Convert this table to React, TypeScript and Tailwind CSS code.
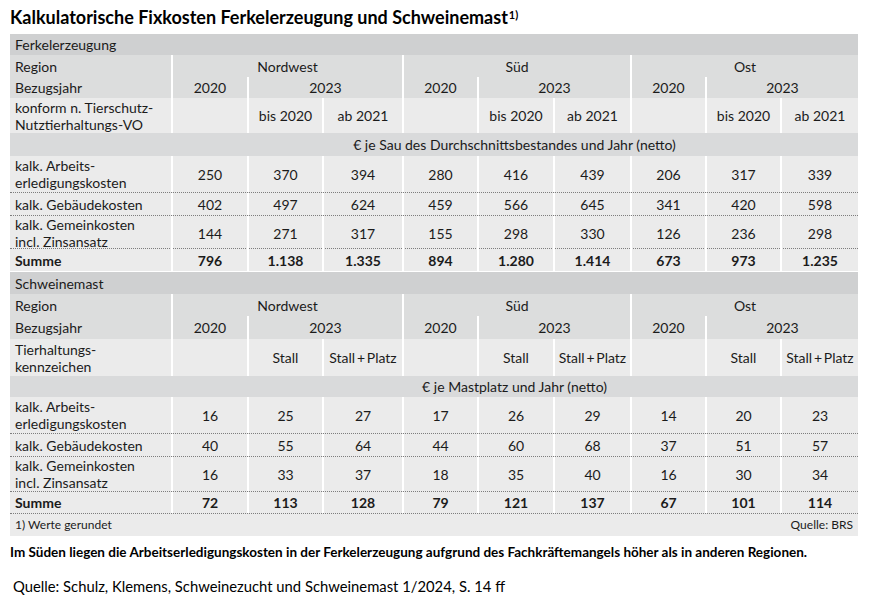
import React from "react";

const grid =
  "grid grid-cols-[161px_76px_75px_80px_75px_76px_77px_75px_75px_78px] w-[848px]";
const sep = "border-l-2 border-white";
const dotted = "border-b border-dotted border-[#7d7d7d]";

type DataRow = { label: string[]; values: string[]; h: string; bold?: boolean; line?: boolean };

const ferkelRows: DataRow[] = [
  { label: ["kalk. Arbeits-", "erledigungskosten"], values: ["250", "370", "394", "280", "416", "439", "206", "317", "339"], h: "h-[37px]", line: true },
  { label: ["kalk. Gebäudekosten"], values: ["402", "497", "624", "459", "566", "645", "341", "420", "598"], h: "h-[23px]", line: true },
  { label: ["kalk. Gemeinkosten", "incl. Zinsansatz"], values: ["144", "271", "317", "155", "298", "330", "126", "236", "298"], h: "h-[33px]", line: true },
  { label: ["Summe"], values: ["796", "1.138", "1.335", "894", "1.280", "1.414", "673", "973", "1.235"], h: "h-[22px]", bold: true },
];

const mastRows: DataRow[] = [
  { label: ["kalk. Arbeits-", "erledigungskosten"], values: ["16", "25", "27", "17", "26", "29", "14", "20", "23"], h: "h-[37px]", line: true },
  { label: ["kalk. Gebäudekosten"], values: ["40", "55", "64", "44", "60", "68", "37", "51", "57"], h: "h-[23px]", line: true },
  { label: ["kalk. Gemeinkosten", "incl. Zinsansatz"], values: ["16", "33", "37", "18", "35", "40", "16", "30", "34"], h: "h-[35px]", line: true },
  { label: ["Summe"], values: ["72", "113", "128", "79", "121", "137", "67", "101", "114"], h: "h-[22px]", bold: true, line: true },
];

function Section({ title, h }: { title: string; h: string }) {
  return (
    <div className={`${h} bg-[#cfd0d1] pl-[5px] flex items-center w-[848px]`}>{title}</div>
  );
}

function Head({ h, third, kind, unit }: { h: string[]; third: string[][]; kind: string[]; unit: string }) {
  const regions = ["Nordwest", "Süd", "Ost"];
  return (
    <>
      <div className={`${grid} ${h[0]} bg-[#dcdddd]`}>
        <div className="pl-[5px] flex items-center">Region</div>
        {regions.map((r) => (
          <div key={r} className={`col-span-3 ${sep} flex items-center justify-center`}>{r}</div>
        ))}
      </div>
      <div className={`${grid} ${h[1]} bg-[#dcdddd]`}>
        <div className="pl-[5px] flex items-center">Bezugsjahr</div>
        {regions.map((r) => (
          <React.Fragment key={r}>
            <div className={`${sep} flex items-center justify-center`}>2020</div>
            <div className={`col-span-2 ${sep} flex items-center justify-center`}>2023</div>
          </React.Fragment>
        ))}
      </div>
      <div className={`${grid} ${h[2]} bg-[#ebebeb]`}>
        <div className="pl-[5px] flex flex-col justify-center leading-[17px]">
          {kind.map((k) => (
            <span key={k}>{k}</span>
          ))}
        </div>
        {third.flat().map((t, i) => (
          <div key={i} className={`${sep} flex items-center justify-center`}>{t}</div>
        ))}
      </div>
      <div className={`${grid} ${h[3]} bg-[#d9dadb]`}>
        <div />
        <div className="col-span-9 flex items-center justify-center">{unit}</div>
      </div>
    </>
  );
}

function Body({ rows }: { rows: DataRow[] }) {
  return (
    <>
      {rows.map((r, i) => (
        <div key={i} className={`${grid} ${r.h} bg-[#ebebeb] ${r.line ? dotted : ""} ${r.bold ? "font-bold" : ""}`}>
          <div className="pl-[5px] flex flex-col justify-center leading-[17px]">
            {r.label.map((l) => (
              <span key={l}>{l}</span>
            ))}
          </div>
          {r.values.map((v, j) => (
            <div key={j} className={`${sep} flex items-center justify-center`}>{v}</div>
          ))}
        </div>
      ))}
    </>
  );
}

export default function App() {
  const third1 = ["", "bis 2020", "ab 2021"];
  const third2 = ["", "Stall", "Stall\u2009+\u2009Platz"];
  return (
    <div className="w-[869px] h-[609px] bg-white text-[#1b1b1b] font-['Lato',sans-serif] text-[14px]">
      <div className="h-[34px] pl-[10px] pt-[5px] text-[18px] font-bold leading-[24px] text-black">
        Kalkulatorische Fixkosten Ferkelerzeugung und Schweinemast<sup className="text-[11px] ml-[1px]">1)</sup>
      </div>
      <div className="ml-[10px] w-[848px]">
        <Section title="Ferkelerzeugung" h="h-[21px]" />
        <Head
          h={["h-[22px]", "h-[21px]", "h-[35px]", "h-[23px]"]}
          kind={["konform n. Tierschutz-", "Nutztierhaltungs-VO"]}
          third={[third1, third1, third1]}
          unit="€ je Sau des Durchschnittsbestandes und Jahr (netto)"
        />
        <Body rows={ferkelRows} />
        <div className="h-[1px]" />
        <Section title="Schweinemast" h="h-[22px]" />
        <Head
          h={["h-[22px]", "h-[23px]", "h-[37px]", "h-[21px]"]}
          kind={["Tierhaltungs-", "kennzeichen"]}
          third={[third2, third2, third2]}
          unit="€ je Mastplatz und Jahr (netto)"
        />
        <Body rows={mastRows} />
        <div className="h-[22px] bg-[#ebebeb] flex items-center justify-between px-[5px] text-[12px]">
          <span>1) Werte gerundet</span>
          <span>Quelle: BRS</span>
        </div>
      </div>
      <div className="pl-[10px] pt-[7px] text-[13.5px] font-bold text-black leading-[18px]">
        Im Süden liegen die Arbeitserledigungskosten in der Ferkelerzeugung aufgrund des Fachkräftemangels höher als in anderen Regionen.
      </div>
      <div className="pl-[13px] pt-[15px] text-[14.8px] text-black leading-[20px]">
        Quelle: Schulz, Klemens, Schweinezucht und Schweinemast 1/2024, S. 14 ff
      </div>
    </div>
  );
}
